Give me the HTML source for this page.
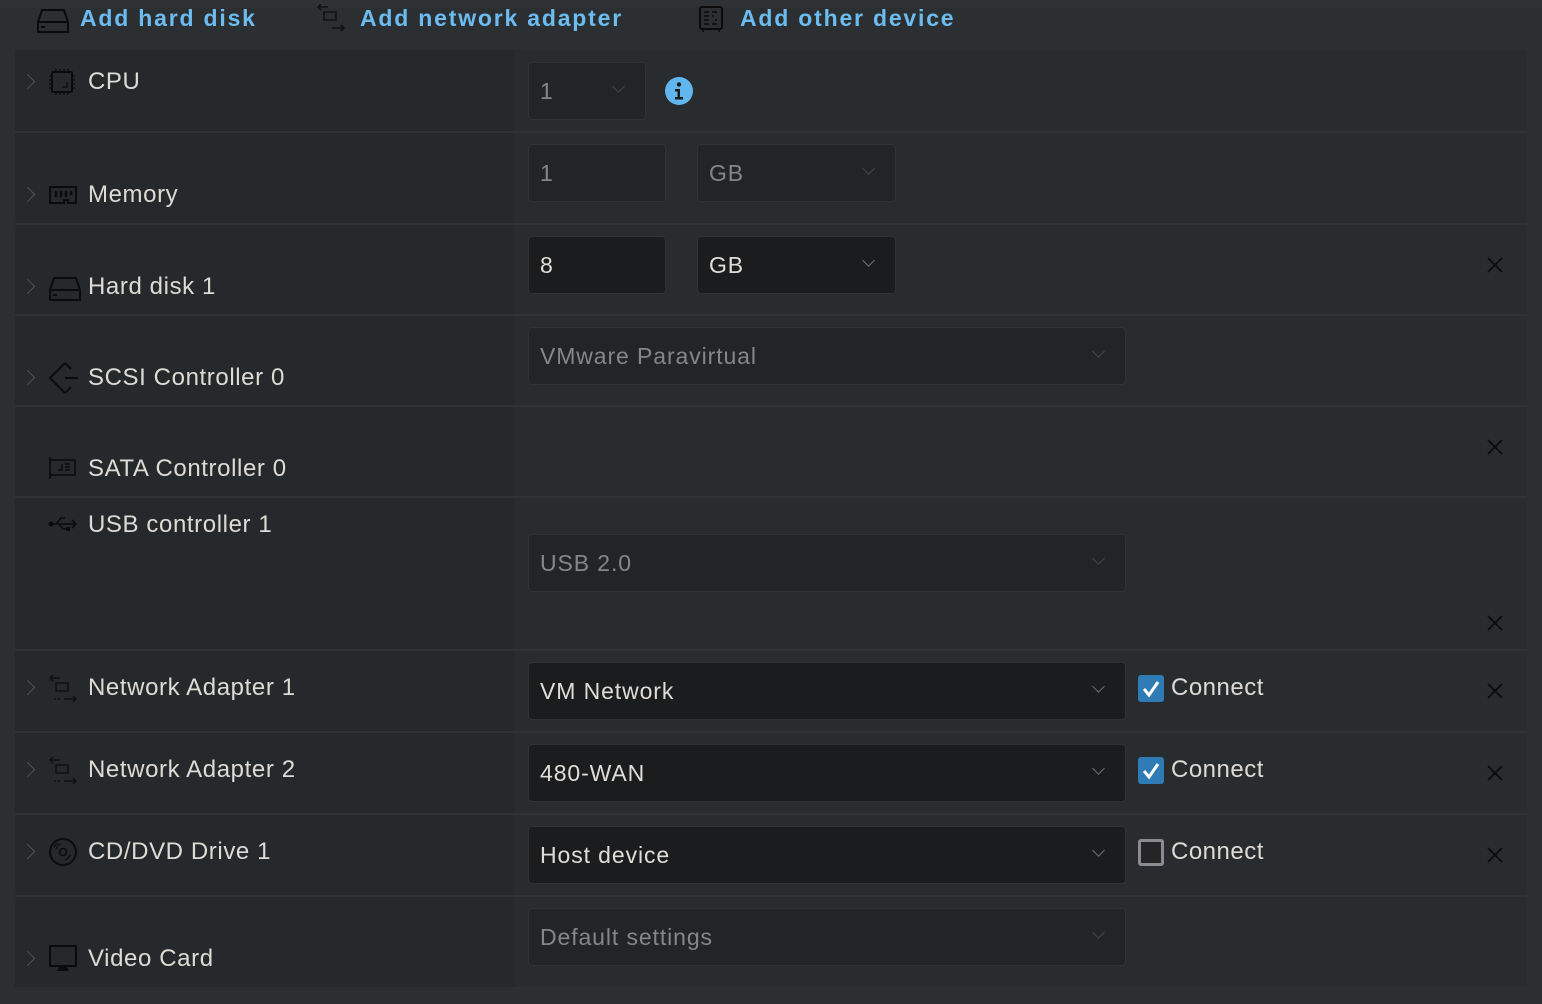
<!DOCTYPE html>
<html><head><style>
body{margin:0;width:1542px;height:1004px;background:#2b2f31;font-family:"Liberation Sans",sans-serif;position:relative;overflow:hidden}
.a{position:absolute}
.top{color:#6cbcf0;font-weight:bold;font-size:23px;top:5px;letter-spacing:1.8px}
.lc{position:absolute;left:15px;width:500px;background:#25292b}
.rc{position:absolute;left:515px;width:1012px;background:#292c2e}
.lbl{position:absolute;left:88px;color:#dedbd5;font-size:24px;line-height:26px;letter-spacing:.6px}
.chev{position:absolute;left:24px;width:10px;height:10px;border-right:1.5px solid #505458;border-top:1.5px solid #505458;transform:rotate(45deg)}
.in{position:absolute;height:58px;border:1px solid #303335;border-radius:4px;box-sizing:border-box;font-size:23px;line-height:56px;padding-left:11px;letter-spacing:.9px}
.dis{background:#222527;color:#85868a}
.en{background:#1b1c1e;color:#e0ddd8}
.dd::after{content:"";position:absolute;right:22px;top:19px;width:8px;height:8px;border-right:1px solid #44474a;border-bottom:1px solid #44474a;transform:rotate(45deg)}
.en.dd::after{border-color:#707070}
.x{position:absolute;left:1485px;width:20px;height:20px}
.cb{position:absolute;left:1138px;width:26px;height:27px;border-radius:3px}
.con{position:absolute;left:1171px;color:#dedbd5;font-size:24px;line-height:26px;letter-spacing:.5px}
.ic{position:absolute;left:48px}
</style></head><body>
<div class="a" style="left:0;top:0;width:1542px;height:8px;background:#2e3234"></div>
<svg class="a" style="left:36px;top:8px" width="34" height="26" viewBox="0 0 34 26"><path d="M6 2h22l4 12v10H2V14z M2 14h30" fill="none" stroke="#0b0b0b" stroke-width="2"/><path d="M5 19h4" stroke="#0b0b0b" stroke-width="2"/></svg>
<div class="top a" style="left:80px">Add hard disk</div>
<svg class="a" style="left:316px;top:4px" width="30" height="30" viewBox="0 0 30 30"><path d="M12 3H2M5 0L2 3l3 3M8 8h12v8H8zM16 24h12M25 21l3 3-3 3" fill="none" stroke="#111" stroke-width="1.6"/></svg>
<div class="top a" style="left:360px">Add network adapter</div>
<svg class="a" style="left:698px;top:5px" width="28" height="28" viewBox="0 0 28 28"><rect x="2" y="2" width="22" height="22" rx="2" fill="none" stroke="#0b0b0b" stroke-width="2"/><path d="M6 7h5M6 11h5M6 15h5M6 19h5M14 7h5M14 11h2M17 15h2M14 19h5M5 25v2M21 25v2" stroke="#0b0b0b" stroke-width="1.5"/></svg>
<div class="top a" style="left:740px">Add other device</div>

<div class="lc" style="top:50px;height:937px"></div>
<div class="rc" style="top:50px;height:937px"></div>
<div class="a" style="left:15px;width:1512px;top:131px;height:2px;background:#2f3335"></div>
<div class="a" style="left:15px;width:1512px;top:223px;height:2px;background:#2f3335"></div>
<div class="a" style="left:15px;width:1512px;top:314px;height:2px;background:#2f3335"></div>
<div class="a" style="left:15px;width:1512px;top:405px;height:2px;background:#2f3335"></div>
<div class="a" style="left:15px;width:1512px;top:496px;height:2px;background:#2f3335"></div>
<div class="a" style="left:15px;width:1512px;top:649px;height:2px;background:#2f3335"></div>
<div class="a" style="left:15px;width:1512px;top:731px;height:2px;background:#2f3335"></div>
<div class="a" style="left:15px;width:1512px;top:813px;height:2px;background:#2f3335"></div>
<div class="a" style="left:15px;width:1512px;top:895px;height:2px;background:#2f3335"></div>

<div class="chev" style="top:76px;left:22px"></div>
<svg class="ic" style="top:68px" width="28" height="28" viewBox="0 0 28 28"><rect x="4" y="4" width="20" height="20" rx="1" fill="none" stroke="#0b0b0b" stroke-width="2"/><path d="M8 1v3M12 1v3M16 1v3M20 1v3M8 24v3M12 24v3M16 24v3M20 24v3M1 8h3M1 12h3M1 16h3M1 20h3M24 8h3M24 12h3M24 16h3M24 20h3M19 14v5h-5" stroke="#0b0b0b" stroke-width="1.3" fill="none"/></svg>
<div class="lbl" style="top:69px">CPU</div>
<div class="chev" style="top:189px;left:22px"></div>
<svg class="ic" style="top:185px" width="30" height="22" viewBox="0 0 30 22"><path d="M2 2h26v16H20v-3h-4v3H2z" fill="none" stroke="#0b0b0b" stroke-width="2"/><path d="M8 6v6M13 6v6M18 6v6M23 6v4" stroke="#0b0b0b" stroke-width="2.5"/></svg>
<div class="lbl" style="top:182px">Memory</div>
<div class="chev" style="top:281px;left:22px"></div>
<svg class="ic" style="top:276px" width="34" height="26" viewBox="0 0 34 26"><path d="M6 2h22l4 12v10H2V14z M2 14h30" fill="none" stroke="#0b0b0b" stroke-width="2"/><path d="M5 19h4" stroke="#0b0b0b" stroke-width="2"/></svg>
<div class="lbl" style="top:274px">Hard disk 1</div>
<div class="chev" style="top:372px;left:22px"></div>
<svg class="ic" style="top:361px" width="32" height="34" viewBox="0 0 32 34"><path d="M17 2L2 17l15 15M17 2l6 6M17 32l6-6M17 17h13" fill="none" stroke="#0b0b0b" stroke-width="2"/></svg>
<div class="lbl" style="top:365px">SCSI Controller 0</div>
<svg class="ic" style="top:457px" width="30" height="24" viewBox="0 0 30 24"><path d="M2 0v22M2 3h25v15H2" fill="none" stroke="#0b0b0b" stroke-width="1.6"/><path d="M14 7v6h-4M17 7h5M17 10h5M17 13h5" stroke="#0b0b0b" stroke-width="1.4" fill="none"/></svg>
<div class="lbl" style="top:456px">SATA Controller 0</div>
<svg class="ic" style="top:513px" width="30" height="22" viewBox="0 0 30 22"><circle cx="3" cy="11" r="2.5" fill="#0b0b0b"/><path d="M3 11h25M24 7l4 4-4 4M8 11l5-6h4M11 11l4 5h4" fill="none" stroke="#0b0b0b" stroke-width="1.6"/><rect x="18" y="14" width="4" height="4" fill="#0b0b0b"/></svg>
<div class="lbl" style="top:512px">USB controller 1</div>
<div class="chev" style="top:682px;left:22px"></div>
<svg class="ic" style="top:675px" width="30" height="28" viewBox="0 0 30 28"><path d="M12 3H2M5 0L2 3l3 3M8 8h12v8H8zM16 24h12M25 21l3 3-3 3" fill="none" stroke="#111" stroke-width="1.6"/><path d="M6 24h8" stroke="#111" stroke-width="1.4" stroke-dasharray="2 2"/></svg>
<div class="lbl" style="top:675px">Network Adapter 1</div>
<div class="chev" style="top:764px;left:22px"></div>
<svg class="ic" style="top:757px" width="30" height="28" viewBox="0 0 30 28"><path d="M12 3H2M5 0L2 3l3 3M8 8h12v8H8zM16 24h12M25 21l3 3-3 3" fill="none" stroke="#111" stroke-width="1.6"/><path d="M6 24h8" stroke="#111" stroke-width="1.4" stroke-dasharray="2 2"/></svg>
<div class="lbl" style="top:757px">Network Adapter 2</div>
<div class="chev" style="top:846px;left:22px"></div>
<svg class="ic" style="top:837px" width="30" height="30" viewBox="0 0 30 30"><circle cx="15" cy="15" r="13" fill="none" stroke="#0b0b0b" stroke-width="2"/><circle cx="15" cy="15" r="3.5" fill="none" stroke="#0b0b0b" stroke-width="1.6"/><path d="M8 12a8 8 0 0 1 5-5M22 18a8 8 0 0 1-5 5M6 10a11 11 0 0 1 4-4" fill="none" stroke="#0b0b0b" stroke-width="1.3"/></svg>
<div class="lbl" style="top:839px">CD/DVD Drive 1</div>
<div class="chev" style="top:953px;left:22px"></div>
<svg class="ic" style="top:944px" width="30" height="30" viewBox="0 0 30 30"><rect x="2" y="2" width="26" height="20" fill="none" stroke="#0b0b0b" stroke-width="2"/><path d="M11 23h8l2 4H9z" fill="#0b0b0b"/></svg>
<div class="lbl" style="top:946px">Video Card</div>

<div class="in dis dd" style="left:528px;top:62px;width:118px">1</div>
<svg class="a" style="left:665px;top:77px" width="28" height="28" viewBox="0 0 28 28"><circle cx="14" cy="14" r="14" fill="#62b6f0"/><circle cx="14" cy="7.5" r="2.2" fill="#1b1c1e"/><path d="M10 12h5v8h3v2.5h-8V20h2.5v-5.5H10z" fill="#1b1c1e"/></svg>
<div class="in dis" style="left:528px;top:144px;width:138px">1</div>
<div class="in dis dd" style="left:697px;top:144px;width:199px">GB</div>
<div class="in en" style="left:528px;top:236px;width:138px">8</div>
<div class="in en dd" style="left:697px;top:236px;width:199px">GB</div>
<div class="in dis dd" style="left:528px;top:327px;width:598px">VMware Paravirtual</div>
<div class="in dis dd" style="left:528px;top:534px;width:598px">USB 2.0</div>
<div class="in en dd" style="left:528px;top:662px;width:598px">VM Network</div>
<div class="in en dd" style="left:528px;top:744px;width:598px">480-WAN</div>
<div class="in en dd" style="left:528px;top:826px;width:598px">Host device</div>
<div class="in dis dd" style="left:528px;top:908px;width:598px">Default settings</div>

<div class="cb" style="top:675px;background:#2f7bb5"><svg width="26" height="27"><path d="M6 14l5 6 9-13" fill="none" stroke="#fff" stroke-width="3"/></svg></div>
<div class="con" style="top:675px">Connect</div>
<div class="cb" style="top:757px;background:#2f7bb5"><svg width="26" height="27"><path d="M6 14l5 6 9-13" fill="none" stroke="#fff" stroke-width="3"/></svg></div>
<div class="con" style="top:757px">Connect</div>
<div class="cb" style="top:839px;background:#252528;border:3px solid #8d8b92;box-sizing:border-box"></div>
<div class="con" style="top:839px">Connect</div>

<svg class="x" style="top:255px"><path d="M3 3l14 14M17 3L3 17" stroke="#0b0b0b" stroke-width="1.8"/></svg>
<svg class="x" style="top:437px"><path d="M3 3l14 14M17 3L3 17" stroke="#0b0b0b" stroke-width="1.8"/></svg>
<svg class="x" style="top:613px"><path d="M3 3l14 14M17 3L3 17" stroke="#0b0b0b" stroke-width="1.8"/></svg>
<svg class="x" style="top:681px"><path d="M3 3l14 14M17 3L3 17" stroke="#0b0b0b" stroke-width="1.8"/></svg>
<svg class="x" style="top:763px"><path d="M3 3l14 14M17 3L3 17" stroke="#0b0b0b" stroke-width="1.8"/></svg>
<svg class="x" style="top:845px"><path d="M3 3l14 14M17 3L3 17" stroke="#0b0b0b" stroke-width="1.8"/></svg>
</body></html>
